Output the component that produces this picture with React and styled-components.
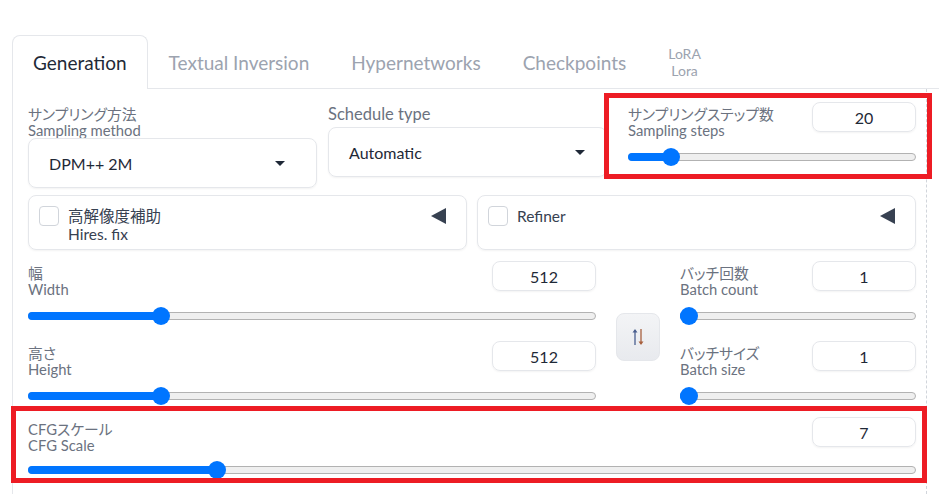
import React from 'react'
import styled, { createGlobalStyle } from 'styled-components'

const GlobalStyle = createGlobalStyle`
  body {
    margin: 0;
    background: #ffffff;
    font-family: "Lato", "Noto Sans CJK JP", sans-serif;
    font-feature-settings: "palt";
    color: #1f2937;
  }
`

const Page = styled.div`
  padding-top: 35px;
  padding-left: 12px;
  width: 915px;
`

const TabBar = styled.div`
  display: flex;
  height: 53px;
  border-bottom: 1px solid #e5e7eb;
  margin-right: -12px;
`

const Tab = styled.div`
  display: flex;
  flex-direction: column;
  align-items: center;
  justify-content: center;
  padding: 0 20px;
  border: 1px solid ${p => (p.$active ? '#e5e7eb' : 'transparent')};
  border-bottom: none;
  border-radius: 8px 8px 0 0;
  background: #ffffff;
  margin-bottom: ${p => (p.$active ? '-1px' : '0')};
  font-size: ${p => (p.$small ? '14px' : '19px')};
  line-height: ${p => (p.$small ? '17px' : '1')};
  color: ${p => (p.$active ? '#1f2937' : '#9ca3af')};
`

const Panel = styled.div`
  border-left: 1px solid #e5e7eb;
  border-right: 1px dashed #d1d5db;
  padding: 13px 10px 20px 15px;
`

const TopRow = styled.div`
  display: grid;
  grid-template-columns: 289px 279px 1fr;
  column-gap: 11px;
  align-items: start;
  margin-bottom: 7px;
`

const Field = styled.div`
  display: flex;
  flex-direction: column;
`

const Label = styled.div`
  display: flex;
  flex-direction: column;
  padding-top: ${p => (p.$big ? '2px' : '4px')};
  margin-bottom: ${p => (p.$big ? '3px' : '0')};
  font-size: ${p => (p.$big ? '16.5px' : '14.8px')};
  line-height: ${p => (p.$big ? '20px' : '16px')};
  color: #6b7280;
`

const Dropdown = styled.div`
  display: flex;
  align-items: center;
  justify-content: space-between;
  height: ${p => p.$h}px;
  box-sizing: border-box;
  padding: 0 ${p => p.$pr}px 0 20px;
  border: 1px solid #e5e7eb;
  border-radius: 8px;
  box-shadow: 0 1px 2px rgba(0, 0, 0, 0.05);
  font-size: 16px;
  color: #1f2937;
`

const Caret = styled.span`
  width: 0;
  height: 0;
  border-left: 5px solid transparent;
  border-right: 5px solid transparent;
  border-top: 5px solid #1f2937;
`

const SliderBlock = styled.div`
  position: relative;
  padding-left: ${p => p.$pl || 0}px;
  ${p =>
    p.$mark &&
    `&::after {
      content: '';
      position: absolute;
      top: ${p.$mark[0]}px;
      right: ${p.$mark[1]}px;
      bottom: ${p.$mark[2]}px;
      left: ${p.$mark[3]}px;
      border: 5px solid #ed1c24;
      pointer-events: none;
    }`}
`

const Head = styled.div`
  display: flex;
  justify-content: space-between;
  align-items: flex-start;
`

const NumberBox = styled.div`
  width: 104px;
  height: 30px;
  box-sizing: border-box;
  display: flex;
  align-items: center;
  justify-content: center;
  border: 1px solid #e5e7eb;
  border-radius: 8px;
  box-shadow: 0 1px 2px rgba(0, 0, 0, 0.05);
  font-size: 16px;
  color: #1f2937;
`

const Track = styled.div`
  position: relative;
  height: 18px;
  margin-top: ${p => p.$mt || 10}px;
  display: flex;
  align-items: center;
`

const Rail = styled.div`
  width: 100%;
  height: 8px;
  box-sizing: border-box;
  border: 1px solid #b2b2b2;
  border-radius: 5px;
  background: #efefef;
`

const Fill = styled.div`
  position: absolute;
  left: 0;
  top: 5px;
  height: 8px;
  border-radius: 5px;
  background: #0075ff;
`

const Thumb = styled.div`
  position: absolute;
  top: 0;
  width: 18px;
  height: 18px;
  border-radius: 50%;
  background: #0075ff;
`

const AccordionRow = styled.div`
  display: grid;
  grid-template-columns: 1fr 1fr;
  column-gap: 10px;
  margin-bottom: 11px;
`

const Accordion = styled.div`
  display: flex;
  justify-content: space-between;
  align-items: flex-start;
  height: 55px;
  box-sizing: border-box;
  padding: 10px 20px 0 10px;
  border: 1px solid #e5e7eb;
  border-radius: 8px;
  box-shadow: 0 1px 2px rgba(0, 0, 0, 0.05);
`

const CheckLabel = styled.div`
  display: flex;
  gap: 9px;
`

const Checkbox = styled.span`
  width: 20px;
  height: 20px;
  box-sizing: border-box;
  border: 1px solid #d1d5db;
  border-radius: 4px;
  background: #ffffff;
  flex: none;
`

const CheckText = styled.div`
  display: flex;
  flex-direction: column;
  font-size: 15.5px;
  line-height: 18px;
  color: #374151;
  padding-top: 1px;
`

const Arrow = styled.span`
  margin-top: 2px;
  width: 0;
  height: 0;
  border-top: 8px solid transparent;
  border-bottom: 8px solid transparent;
  border-right: 15px solid #374151;
`

const DimsRow = styled.div`
  display: grid;
  grid-template-columns: 568px 44px 1fr;
  column-gap: 20px;
  margin-bottom: 12px;
`

const Column = styled.div`
  display: flex;
  flex-direction: column;
  gap: 16px;
`

const SwapButton = styled.div`
  margin-top: 52px;
  height: 48px;
  box-sizing: border-box;
  display: flex;
  align-items: center;
  justify-content: center;
  border: 1px solid #e5e7eb;
  border-radius: 8px;
  background: linear-gradient(to bottom, #f3f4f6, #e8eaee);
`

const Slider = ({ value, min, max, mt }) => {
  const p = (value - min) / (max - min)
  return (
    <Track $mt={mt}>
      <Rail />
      <Fill style={{ width: `calc(9px + ${p} * (100% - 18px))` }} />
      <Thumb style={{ left: `calc(${p} * (100% - 18px))` }} />
    </Track>
  )
}

const SliderField = ({ ja, en, value, min, max, mt, ...rest }) => (
  <SliderBlock {...rest}>
    <Head>
      <Label>
        <span>{ja}</span>
        <span>{en}</span>
      </Label>
      <NumberBox>{value}</NumberBox>
    </Head>
    <Slider value={value} min={min} max={max} mt={mt} />
  </SliderBlock>
)

const SwapIcon = () => (
  <svg width="14" height="18" viewBox="0 0 14 18">
    <line x1="4" y1="2" x2="4" y2="17" stroke="#4a5f8f" strokeWidth="1.3" />
    <path d="M1.5 4.5 L4 1 L6.5 4.5 Z" fill="#4a5f8f" />
    <line x1="10" y1="1" x2="10" y2="16" stroke="#a8603f" strokeWidth="1.3" />
    <path d="M7.5 13.5 L10 17 L12.5 13.5 Z" fill="#a8603f" />
  </svg>
)

const App = () => {
  return (
    <Page>
      <GlobalStyle />
      <TabBar>
        <Tab $active>Generation</Tab>
        <Tab>Textual Inversion</Tab>
        <Tab>Hypernetworks</Tab>
        <Tab>Checkpoints</Tab>
        <Tab $small>
          <span>LoRA</span>
          <span>Lora</span>
        </Tab>
      </TabBar>
      <Panel>
        <TopRow>
          <Field>
            <Label>
              <span>サンプリング方法</span>
              <span>Sampling method</span>
            </Label>
            <Dropdown $h={50} $pr={31}>
              DPM++ 2M
              <Caret />
            </Dropdown>
          </Field>
          <Field>
            <Label $big>Schedule type</Label>
            <Dropdown $h={50} $pr={21}>
              Automatic
              <Caret />
            </Dropdown>
          </Field>
          <SliderField
            ja="サンプリングステップ数"
            en="Sampling steps"
            value={20}
            min={1}
            max={150}
            $pl={10}
            $mark={[-9, -16, -13, -14]}
          />
        </TopRow>
        <AccordionRow>
          <Accordion>
            <CheckLabel>
              <Checkbox />
              <CheckText>
                <span>高解像度補助</span>
                <span>Hires. fix</span>
              </CheckText>
            </CheckLabel>
            <Arrow />
          </Accordion>
          <Accordion>
            <CheckLabel>
              <Checkbox />
              <CheckText>
                <span>Refiner</span>
              </CheckText>
            </CheckLabel>
            <Arrow />
          </Accordion>
        </AccordionRow>
        <DimsRow>
          <Column>
            <SliderField ja="幅" en="Width" value={512} min={64} max={2048} />
            <SliderField ja="高さ" en="Height" value={512} min={64} max={2048} />
          </Column>
          <SwapButton>
            <SwapIcon />
          </SwapButton>
          <Column>
            <SliderField ja="バッチ回数" en="Batch count" value={1} min={1} max={100} />
            <SliderField ja="バッチサイズ" en="Batch size" value={1} min={1} max={8} />
          </Column>
        </DimsRow>
        <SliderField
          ja="CFGスケール"
          en="CFG Scale"
          value={7}
          min={1}
          max={30}
          mt={8}
          $mark={[-11, -11, -4, -17]}
        />
      </Panel>
    </Page>
  )
}

export default App
